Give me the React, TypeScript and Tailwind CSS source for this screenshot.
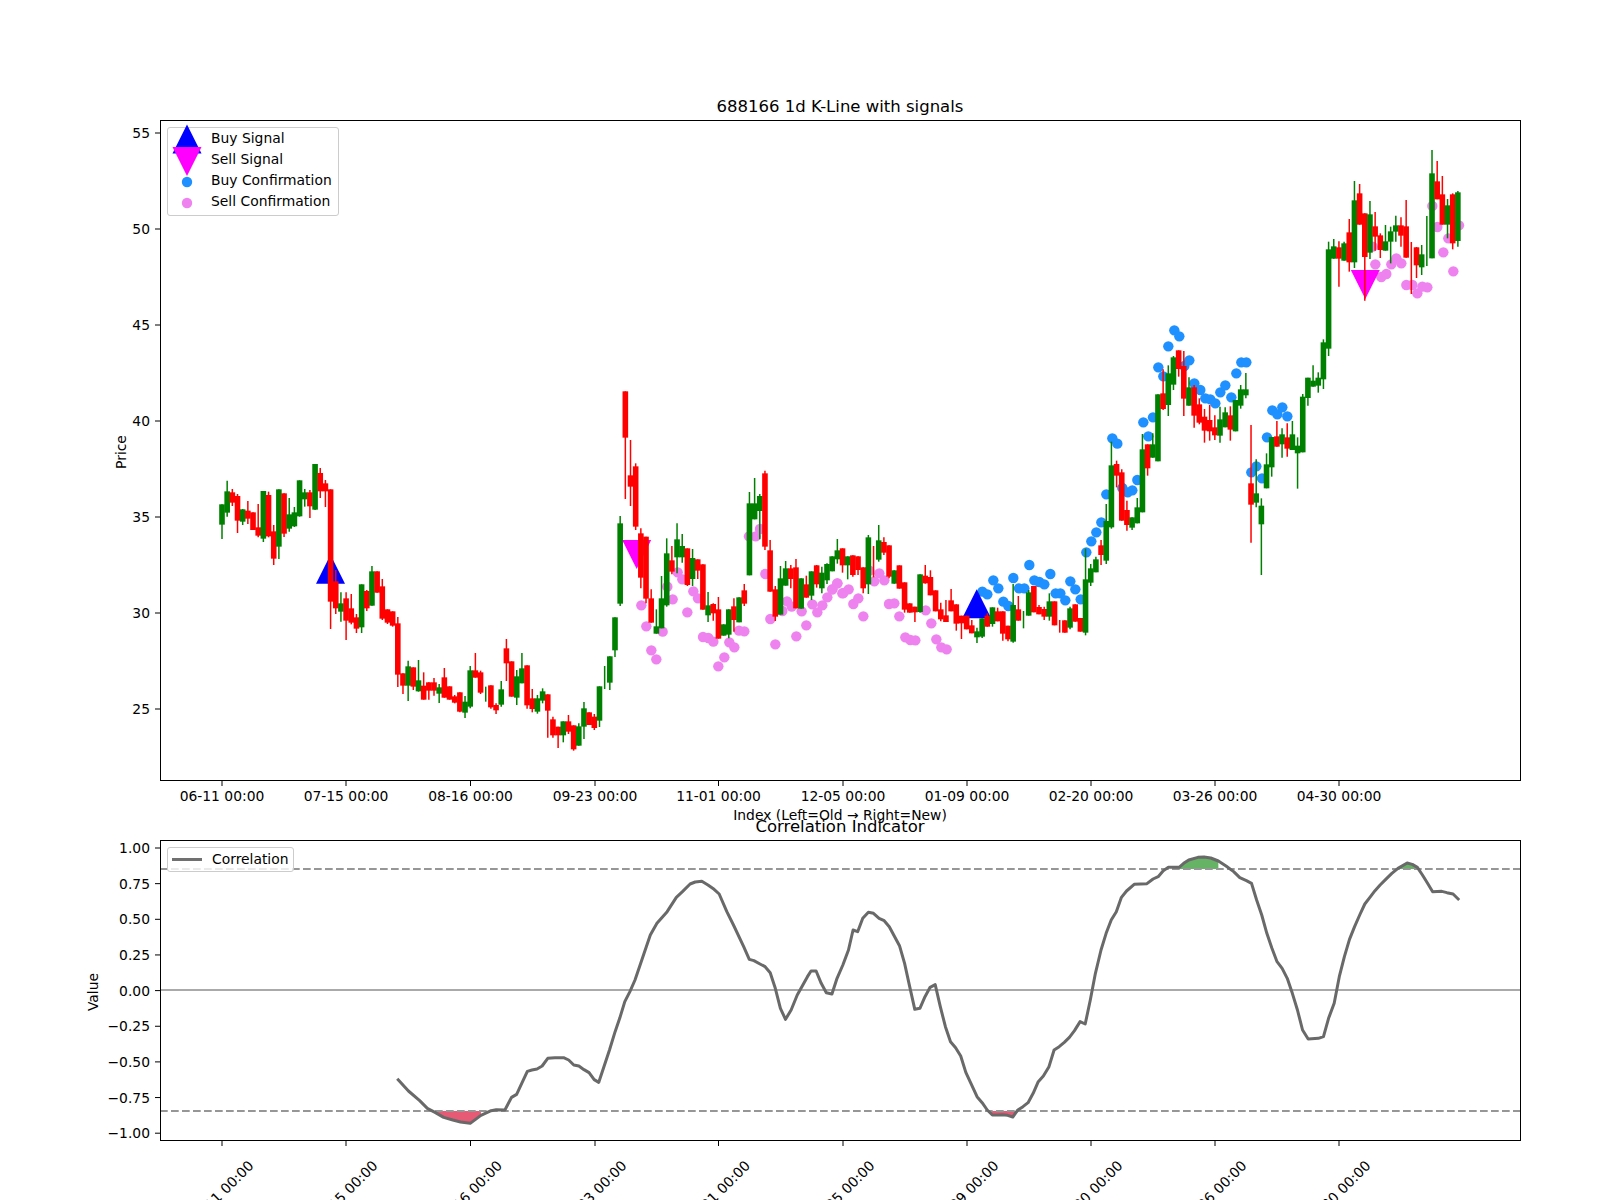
// K-line figure: a price panel with signals on top, a correlation panel below.
type Candle = ['g' | 'r', number, number, number, number];

// [colour, wick top, body top, body bottom, wick bottom], read off 3x crops, so y = y0 + v / 3
const partA: Candle[] = [
  ['g',193,193,254,297],['g',122,154,218,230],['r',147,157,188,198],['r',162,168,242,279],['g',207,208,245,255],
  ['r',183,212,236,252],['r',217,217,270,270],['r',192,262,287,292],['g',153,153,296,306],['r',155,165,289,292],
  ['r',255,274,356,375],['g',148,148,320,357],['r',160,160,281,291],['g',174,223,266,275],['g',201,217,259,261],
  ['g',121,121,229,230],['g',147,157,178,200],['r',150,157,199,234],['g',72,72,209,210],['r',84,99,154,174],
  ['r',120,130,154,201],['r',148,148,485,567],['r',390,424,505,522],['g',457,490,515,545],['r',457,475,542,600],
  ['r',462,505,548,553],['r',522,532,566,579],['g',433,433,562,579],['r',450,453,505,513],['g',378,394,497,497],
  ['r',394,394,458,458],['r',417,439,536,540],['r',508,508,548,552],['r',514,514,557,560],['r',531,550,704,741],
  ['r',700,700,737,762],['g',662,679,737,783],['r',682,682,740,750],['g',660,721,754,755],['r',697,737,779,779],
  ['r',727,727,752,779],['r',714,727,752,767],['g',732,742,761,789],['r',684,712,773,773],['r',739,739,779,779],
  ['r',765,769,788,790],['r',757,757,815,817],['g',768,785,818,834],['g',678,691,800,805],['r',639,691,713,713],
  ['r',692,697,758,762],['g',740,762,762,785],['r',736,736,802,806],['r',790,795,811,822],['g',723,748,794,800],
  ['r',597,625,670,723],['r',664,664,770,770],['g',690,709,773,795],['g',639,685,730,730],['r',676,676,796,806],
];
const partB: Candle[] = [
  ['r',927,955,987,997],['g',945,955,995,1001],['g',925,934,962,970],['r',943,943,992,1073],['r',1010,1018,1066,1073],
  ['r',1040,1040,1066,1104],['g',1024,1024,1066,1087],['r',1005,1024,1055,1062],['r',1036,1036,1108,1112],['g',1030,1039,1097,1097],
  ['g',966,985,1040,1077],['r',997,997,1035,1035],['r',1002,1010,1044,1050],['g',919,919,1022,1041],['g',858,892,892,927],
  ['g',829,829,908,930],['g',712,712,811,831],['g',408,430,671,678],['r',34,34,173,357],['r',180,286,320,378],
  ['r',250,259,440,450],['r',445,460,593,625],['r',470,470,656,670],['r',628,655,728,728],['g',688,739,761,761],
  ['g',588,655,745,745],['g',475,520,676,680],['r',498,541,575,583],['g',430,478,532,580],['g',462,498,532,548],
  ['r',505,505,615,618],['g',507,534,597,618],['r',538,538,572,597],['r',553,553,689,689],['g',636,676,706,726],
  ['r',670,672,700,722],['r',651,688,776,776],['g',733,733,767,767],['g',688,688,764,775],['r',655,679,720,755],
  ['g',652,652,727,727],['r',612,631,671,678],['g',336,370,586,586],['g',294,370,418,418],['g',342,348,393,478],
  ['r',272,280,500,510],['r',480,511,635,635],['r',618,628,710,723],['g',558,595,704,704],['g',543,565,617,617],
  ['r',555,565,597,625],['r',537,562,685,685],['g',595,595,686,686],['r',587,613,653,653],['g',574,574,647,660],
  ['r',555,556,613,623],['g',560,578,625,640],['g',550,552,601,612],['g',529,529,574,574],['g',477,511,538,551],
];
const partC: Candle[] = [
  ['r',325,325,376,398],['g',349,349,376,418],['r',346,346,405,410],['r',349,349,390,405],['r',382,382,445,460],
  ['g',285,292,433,462],['r',318,365,365,412],['g',255,301,359,365],['r',292,306,338,345],['r',316,316,410,415],
  ['g',391,391,431,431],['r',376,376,446,446],['r',427,427,509,518],['r',490,490,518,518],['r',500,500,517,546],
  ['g',403,403,516,518],['r',375,407,430,431],['r',391,411,466,466],['r',451,451,514,514],['r',488,508,538,544],
  ['r',480,526,546,546],['r',447,481,514,514],['r',493,493,551,572],['r',527,527,550,597],['r',527,527,568,568],
  ['r',540,556,580,580],['g',563,574,592,609],['g',535,535,590,594],['r',520,527,560,560],['g',502,502,552,560],
  ['r',503,514,544,544],['r',514,514,581,602],['r',557,557,598,604],['g',432,495,605,608],['r',468,508,542,542],
  ['g',513,540,540,565],['g',450,457,527,527],['r',438,438,517,517],['r',495,501,523,523],['r',500,507,530,540],
  ['g',460,484,530,542],['r',484,484,556,556],['r',540,560,560,578],['r',541,541,578,578],['g',500,505,563,568],
  ['r',493,493,545,545],
];
const partD: Candle[] = [
  ['r',924,924,965,965],['g',716,808,968,976],['g',762,775,818,828],['g',740,748,787,787],['r',690,706,735,765],
  ['g',582,633,752,762],['g',395,466,652,656],['r',452,462,497,532],['r',478,487,632,632],['r',572,600,645,662],
  ['g',622,622,653,660],['g',564,592,640,640],['g',372,418,607,607],['r',403,403,475,497],['g',370,403,443,443],
  ['g',253,253,454,454],['r',178,250,297,300],['g',166,190,285,318],['g',138,142,224,240],['r',121,121,177,200],
  ['r',123,168,266,318],['g',202,232,287,287],['r',225,232,317,353],['r',265,283,338,343],['r',297,320,362,398],
  ['r',285,330,364,392],['r',316,352,376,390],['g',290,328,377,398],['g',292,307,352,352],['r',289,316,359,392],
  ['g',270,270,364,364],['g',225,238,287,296],['g',189,238,256,265],['r',345,520,584,698],['g',448,550,578,592],
  ['g',565,587,643,795],['g',430,463,535,535],['g',381,381,472,500],['r',333,379,410,410],['g',355,373,403,443],
  ['r',340,382,416,440],['g',333,373,420,420],['g',382,407,430,536],['g',252,260,427,427],['g',203,203,264,287],
  ['g',166,212,230,230],['g',187,203,227,248],['g',88,97,208,237],
];
const partE: Candle[] = [
  ['g',335,358,656,678],['g',327,349,386,386],['r',334,352,386,470],['g',335,340,392,392],['r',267,307,397,425],
  ['g',153,211,397,414],['r',162,190,284,284],['r',250,250,381,512],['g',213,253,368,387],['r',246,289,320,362],
  ['r',310,316,360,384],['g',285,334,362,362],['g',290,304,335,400],['g',257,286,305,335],['r',262,286,317,350],
  ['r',210,289,383,383],['r',336,420,420,492],['r',351,352,406,444],['g',345,373,412,435],['g',258,340,340,408],
  ['g',60,130,385,385],['r',93,154,208,208],['r',138,193,284,284],['g',207,226,284,325],['r',190,193,340,358],
  ['g',183,187,333,350],
];

const toPage = (rows: Candle[], y0: number) =>
  rows.map(([c, a, b, d, e]) => [c, y0 + a / 3, y0 + b / 3, y0 + d / 3, y0 + e / 3] as Candle);

const candles: Candle[] = [
  ...toPage(partA, 440),
  ...toPage(partB, 380),
  ...toPage(partC, 440),
  ...toPage(partD, 310),
  ...toPage(partE, 130),
];

const candleX = (i: number) => 222 + i * 5.171;

const crop = (x0: number, y0: number, pts: number[][]) => pts.map(([x, y]) => [x0 + x / 3, y0 + y / 3]);

const violet = [
  ...crop(520, 380, [[364,676],[379,739],[394,811],[409,838],[428,755],[442,620],[458,658],[473,577],[487,598],[502,697],[520,634],[534,655],[549,771],[565,774],[580,785],[595,859],[613,832],[628,787],[643,802],[657,752],[673,754],[687,469],[707,469],[720,447],[736,582],[751,717],[766,793],[787,693],[801,664],[815,680],[829,769],[845,694],[859,736],[877,673],[892,697],[907,676],[922,652],[937,628],[952,610],[967,640]]),
  ...crop(820, 440, [[37,448],[52,430],[70,459],[86,448],[100,492],[115,475],[130,529],[148,392],[163,424],[178,400],[193,421],[207,492],[223,490],[238,529],[256,592],[271,600],[286,601],[317,511],[334,550],[349,598],[364,622],[380,628]]),
  ...crop(1280, 130, [[278,350],[286,403],[304,441],[319,432],[334,403],[349,385],[364,400],[379,465],[397,465],[412,490],[427,470],[442,472],[457,228],[472,291],[490,367],[505,325],[520,424],[537,286]]),
];

const blue = [
  ...crop(820, 440, [[487,455],[502,463],[520,421],[535,445],[550,485],[565,498],[580,414],[597,445],[613,445],[628,375],[643,421],[658,426],[673,433],[691,402],[707,460],[721,460],[736,481],[751,424],[766,448],[782,478]]),
  ...crop(1080, 310, [[19,727],[34,694],[49,667],[64,637],[79,553],[97,385],[112,401],[127,534],[143,547],[157,541],[172,510],[190,337],[205,379],[219,322],[235,172],[250,199],[265,109],[283,61],[298,79],[313,168],[328,151],[343,220],[361,240],[376,265],[391,268],[406,280],[421,247],[436,226],[454,262],[469,190],[484,157],[499,157],[514,487],[529,469],[546,505],[561,382],[577,301],[592,313],[607,292],[622,319]]),
];

// the correlation crops were 800 wide, scaled 1.96x across and 3x down
const wide = (x0: number, pts: number[][]) => pts.map(([x, y]) => [x0 + x / 1.96, 780 + y / 3]);

const corr = [
  ...wide(60, [[661,896],[683,933],[705,962],[720,985],[735,997],[752,1012],[770,1020],[785,1026],[804,1030],[825,1006],[845,992],[855,989],[872,990],[885,952],[895,943],[905,910],[916,874],[925,870],[935,867],[945,858],[956,835],[970,833],[987,833],[997,840],[1007,855],[1017,858],[1027,869],[1037,878],[1047,899],[1056,907],[1077,810],[1088,755],[1097,715],[1107,665],[1117,635],[1127,600],[1137,555],[1157,465],[1170,430],[1190,395],[1208,352],[1220,335],[1235,312],[1245,306],[1258,304],[1270,315],[1282,328],[1292,342],[1307,395],[1320,435],[1340,500],[1351,538],[1360,542],[1372,552],[1382,560],[1392,578],[1402,625],[1412,685],[1422,718],[1433,690],[1445,645],[1465,590],[1472,573],[1482,573],[1492,610],[1502,638],[1513,642],[1523,595]]),
  ...wide(800, [[84,555],[95,510],[104,450],[113,455],[123,415],[134,397],[144,400],[155,415],[165,422],[175,440],[195,497],[205,550],[215,620],[225,688],[235,685],[245,650],[255,622],[265,614],[275,680],[285,740],[295,785],[305,803],[315,828],[325,877],[335,910],[347,950],[357,968],[367,990],[377,1005],[387,1005],[397,1004],[407,1006],[417,1011],[427,990],[437,980],[447,968],[457,940],[467,905],[477,888],[488,860],[498,810],[508,800],[518,787],[528,772],[538,752],[549,725],[559,732],[569,660],[579,580],[590,510],[600,460],[610,420],[620,395],[630,352],[640,333],[655,313],[680,311],[692,297],[702,290],[712,272],[722,262],[743,262],[752,250],[762,240],[780,232],[792,231],[805,234],[820,243],[835,258],[850,275],[862,293],[875,302],[885,310],[895,360],[905,405],[915,460],[925,505],[935,545],[945,565],[955,595],[965,640],[975,690],[985,750],[996,777],[1016,775],[1026,770],[1036,715],[1047,670],[1057,590],[1067,530],[1077,478],[1087,440],[1097,405],[1107,372],[1117,352],[1127,332],[1137,315],[1150,295],[1160,280],[1172,265],[1190,249],[1200,253],[1210,262],[1220,285],[1230,310],[1240,335],[1258,334],[1268,338],[1280,342],[1292,360]]),
];

const tickX = [222, 346, 470.5, 595, 718.5, 843, 967, 1091, 1215, 1339];
const tickDates = ['06-11', '07-15', '08-16', '09-23', '11-01', '12-05', '01-09', '02-20', '03-26', '04-30'];

const priceTicks = [55, 50, 45, 40, 35, 30, 25];
const priceY = (p: number) => 229 + (50 - p) * 19.2;
const valueTicks = ['1.00', '0.75', '0.50', '0.25', '0.00', '−0.25', '−0.50', '−0.75', '−1.00'];
const valueY = (i: number) => 848 + i * 35.65;

const UP_LINE = 869;
const DOWN_LINE = 1111;

const triangle = (cx: number, y: number, up: boolean) =>
  up ? `${cx},${y - 29} ${cx + 14.5},${y} ${cx - 14.5},${y}` : `${cx - 14.5},${y} ${cx + 14.5},${y} ${cx},${y + 29}`;

function region(x0: number, x1: number, line: number) {
  const pts = corr.filter(([x]) => x >= x0 && x <= x1);
  return [[pts[0][0], line], ...pts, [pts[pts.length - 1][0], line]].map((p) => p.join(',')).join(' ');
}

function XTicks({ y, labelled }: { y: number; labelled: boolean }) {
  return (
    <>
      {tickX.map((x, i) => (
        <g key={x}>
          <line x1={x} x2={x} y1={y} y2={y + 5} stroke="#000" />
          {labelled ? (
            <text x={x} y={801} textAnchor="middle">{tickDates[i]} 00:00</text>
          ) : (
            <text x={x - 1} y={1198} textAnchor="middle" transform={`rotate(-45 ${x - 1} 1193)`}>{tickDates[i]} 00:00</text>
          )}
        </g>
      ))}
    </>
  );
}

function PriceChart() {
  return (
    <svg viewBox="160 120 1360 660" className="block w-[1360px] h-[660px] overflow-visible">
      {violet.map(([x, y], i) => <circle key={i} cx={x} cy={y} r={5.2} fill="#EE82EE" />)}
      {blue.map(([x, y], i) => <circle key={i} cx={x} cy={y} r={5.2} fill="#1E90FF" />)}
      <polygon points={triangle(330.5, 583.7, true)} fill="#0000ff" />
      <polygon points={triangle(976.7, 618.3, true)} fill="#0000ff" />
      <polygon points={triangle(636.7, 540, false)} fill="#ff00ff" />
      <polygon points={triangle(1365.3, 270, false)} fill="#ff00ff" />
      {candles.map(([c, top, bodyTop, bodyBottom, bottom], i) => {
        const color = c === 'g' ? '#008000' : '#ff0000';
        const x = candleX(i);
        return (
          <g key={i}>
            <line x1={x} x2={x} y1={top} y2={bottom} stroke={color} strokeWidth={1.5} />
            {bodyBottom > bodyTop && <rect x={x - 2.8} y={bodyTop} width={5.6} height={bodyBottom - bodyTop} fill={color} />}
          </g>
        );
      })}
      <rect x={160.5} y={120.5} width={1360} height={660} fill="none" stroke="#000" />
      {priceTicks.map((p) => (
        <g key={p}>
          <line x1={155} x2={160} y1={priceY(p)} y2={priceY(p)} stroke="#000" />
          <text x={150} y={priceY(p) + 5.4} textAnchor="end">{p}</text>
        </g>
      ))}
      <XTicks y={781} labelled />
      <text x={120.5} y={457} textAnchor="middle" transform="rotate(-90 120.5 452)">Price</text>
    </svg>
  );
}

function CorrelationChart() {
  return (
    <svg viewBox="160 840 1360 300" className="block w-[1360px] h-[300px] overflow-visible">
      <polygon points={region(434, 482, DOWN_LINE)} fill="#DC143C" opacity={0.7} />
      <polygon points={region(985, 1020, DOWN_LINE)} fill="#DC143C" opacity={0.7} />
      <polygon points={region(1179, 1226, UP_LINE)} fill="#008000" opacity={0.6} />
      <polygon points={region(1397, 1418, UP_LINE)} fill="#008000" opacity={0.6} />
      <line x1={160} x2={1520} y1={990} y2={990} stroke="#aaaaaa" strokeWidth={2} />
      <line x1={160} x2={1520} y1={UP_LINE} y2={UP_LINE} stroke="#969696" strokeWidth={2.1} strokeDasharray="7.7 3.3" />
      <line x1={160} x2={1520} y1={DOWN_LINE} y2={DOWN_LINE} stroke="#969696" strokeWidth={2.1} strokeDasharray="7.7 3.3" />
      <polyline points={corr.map((p) => p.join(',')).join(' ')} fill="none" stroke="#696969" strokeWidth={3} strokeLinejoin="round" />
      <rect x={160.5} y={840.5} width={1360} height={300} fill="none" stroke="#000" />
      {valueTicks.map((v, i) => (
        <g key={v}>
          <line x1={155} x2={160} y1={valueY(i)} y2={valueY(i)} stroke="#000" />
          <text x={150} y={valueY(i) + 5} textAnchor="end">{v}</text>
        </g>
      ))}
      <XTicks y={1141} labelled={false} />
      <text x={93} y={997} textAnchor="middle" transform="rotate(-90 93 992)">Value</text>
    </svg>
  );
}

function LegendRow({ label, children }: { label: string; children: React.ReactNode }) {
  return (
    <div className="flex items-center h-[20.8px]">
      <svg viewBox="0 0 30 20" className="w-[30px] h-[20px] ml-[4px] mr-[9px] shrink-0 overflow-visible">{children}</svg>
      <span className="whitespace-nowrap">{label}</span>
    </div>
  );
}

export default function App() {
  return (
    <div className="w-[1600px] h-[1200px] overflow-hidden bg-white text-black text-[13.89px] font-['DejaVu_Sans',sans-serif] pt-[92px] pl-[160px]">
      <div className="w-[1360px]">
        <h2 className="h-[28px] pt-[2px] text-center text-[16.5px] leading-[26px] font-normal">688166 1d K-Line with signals</h2>
        <div className="relative">
          <PriceChart />
          <div className="absolute left-[7px] top-[7px] w-[172px] h-[89px] flex flex-col pt-[0.5px] rounded-[3px] border border-[#cccccc] bg-white/80">
            <LegendRow label="Buy Signal"><polygon points="0.5,24.5 29.5,24.5 15,-4.5" fill="#0000ff" /></LegendRow>
            <LegendRow label="Sell Signal"><polygon points="0.5,-3.1 29.5,-3.1 15,25.9" fill="#ff00ff" /></LegendRow>
            <LegendRow label="Buy Confirmation"><circle cx={15} cy={12} r={5.2} fill="#1E90FF" /></LegendRow>
            <LegendRow label="Sell Confirmation"><circle cx={15} cy={12} r={5.2} fill="#EE82EE" /></LegendRow>
          </div>
        </div>
        <div className="h-[60px] text-center">
          <div className="pt-[27px] leading-[16px]">Index (Left=Old → Right=New)</div>
          <h2 className="-mt-[8px] text-[16.5px] leading-[24px] font-normal">Correlation Indicator</h2>
        </div>
        <div className="relative">
          <CorrelationChart />
          <div className="absolute left-[7px] top-[7px] w-[127px] h-[25px] flex items-center rounded-[3px] border border-[#cccccc] bg-white/80">
            <span className="ml-[4px] mr-[10px] w-[30px] h-[3px] bg-[#707070]" />
            <span>Correlation</span>
          </div>
        </div>
      </div>
    </div>
  );
}
